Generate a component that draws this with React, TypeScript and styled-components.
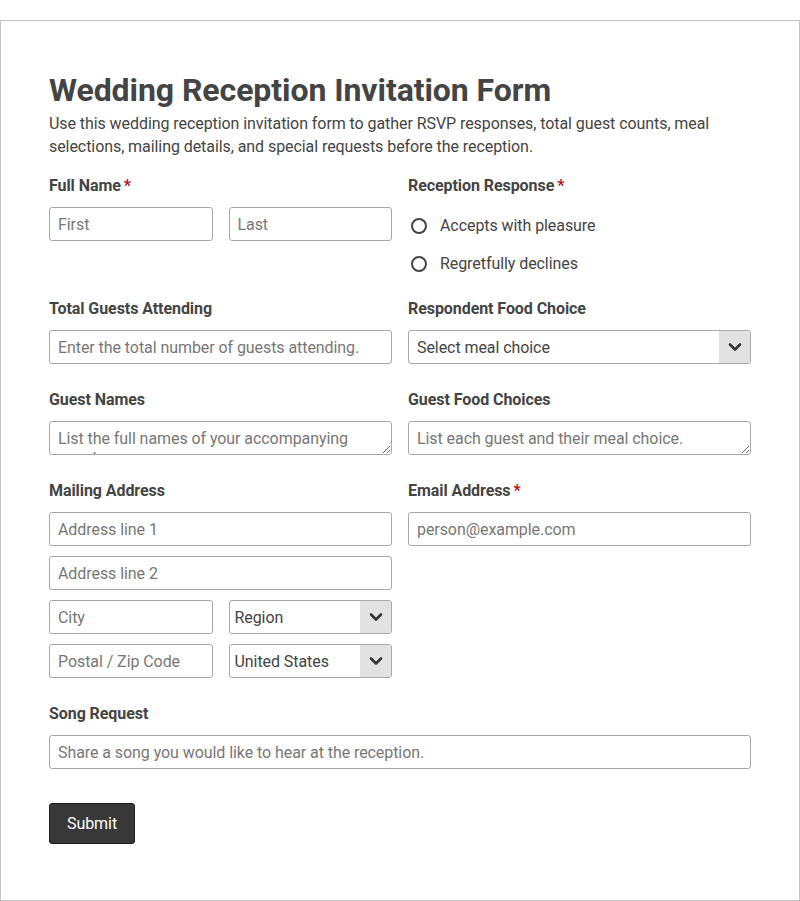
import styled, { createGlobalStyle } from "styled-components";

const GlobalStyle = createGlobalStyle`
  body {
    margin: 0;
    background: #fff;
    font-family: Roboto, "Liberation Sans", Arial, sans-serif;
    color: #444;
    letter-spacing: -0.07px;
  }
  * {
    box-sizing: border-box;
  }
`;

const Page = styled.div`
  width: 800px;
  margin-top: 20px;
  border: 1px solid #c4c4c4;
  padding: 49px 48px 56px 48px;
`;

const Title = styled.h1`
  margin: 0 0 2px;
  font-size: 32px;
  line-height: 40px;
  font-weight: 700;
  color: #444;
`;

const Description = styled.p`
  margin: 0 0 18px;
  font-size: 16px;
  line-height: 23px;
  color: #444;
`;

const Grid = styled.div`
  display: grid;
  grid-template-columns: 1fr 1fr;
  column-gap: 16px;
  row-gap: 26px;
`;

const Field = styled.div<{ $wide?: boolean }>`
  display: flex;
  flex-direction: column;
  grid-column: ${(p) => (p.$wide ? "1 / -1" : "auto")};
`;

const Label = styled.label`
  display: block;
  font-size: 16px;
  line-height: 20px;
  font-weight: 700;
  color: #444;
  margin-bottom: 11px;
`;

const Required = styled.span`
  color: #b3131b;
  margin-left: 3px;
`;

const Pair = styled.div`
  display: grid;
  grid-template-columns: 1fr 1fr;
  gap: 16px;
`;

const Stack = styled.div`
  display: flex;
  flex-direction: column;
  gap: 10px;
`;

const Input = styled.input`
  width: 100%;
  height: 34px;
  border: 1px solid #a8a8a8;
  border-radius: 3px;
  padding: 0 8px;
  font-family: inherit;
  font-size: 16px;
  letter-spacing: inherit;
  color: #444;
  background: #fff;

  &::placeholder {
    color: #777;
  }
`;

const TextArea = styled.textarea`
  width: 100%;
  height: 34px;
  border: 1px solid #a8a8a8;
  border-radius: 3px;
  padding: 7px 8px 0;
  font-family: inherit;
  font-size: 16px;
  line-height: 19px;
  letter-spacing: inherit;
  color: #444;
  resize: vertical;
  overflow: hidden;

  &::placeholder {
    color: #777;
  }
`;

const SelectBox = styled.div`
  display: flex;
  height: 34px;
  border: 1px solid #a8a8a8;
  border-radius: 3px;
  overflow: hidden;
  background: #fff;
`;

const Select = styled.select<{ $pad: number }>`
  flex: 1;
  min-width: 0;
  appearance: none;
  border: none;
  outline: none;
  background: transparent;
  padding: 0 0 0 ${(p) => p.$pad}px;
  font-family: inherit;
  font-size: 16px;
  letter-spacing: inherit;
  color: #444;
`;

const ArrowBox = styled.div`
  width: 31px;
  display: flex;
  align-items: center;
  justify-content: center;
  background: #e2e2e2;
  color: #333;
`;

const RadioGroup = styled.div`
  display: flex;
  flex-direction: column;
  gap: 19px;
  padding-top: 9px;
`;

const RadioOption = styled.label`
  display: flex;
  align-items: center;
  height: 19px;
  font-size: 16px;
  color: #444;
`;

const Radio = styled.input`
  appearance: none;
  width: 16px;
  height: 16px;
  margin: 0 13px 0 3px;
  border: 2px solid #444;
  border-radius: 50%;
  background: #fff;
`;

const Actions = styled.div`
  margin-top: 34px;
`;

const SubmitButton = styled.button`
  height: 41px;
  padding: 0 17px;
  border: 1px solid #1e1e1e;
  border-radius: 3px;
  background: #383838;
  color: #fff;
  font-family: inherit;
  font-size: 16px;
  letter-spacing: inherit;
`;

function Chevron() {
  return (
    <svg width="14" height="10" viewBox="0 0 14 10">
      <path
        d="M2 2.5 L7 7.5 L12 2.5"
        fill="none"
        stroke="currentColor"
        strokeWidth="2.6"
        strokeLinecap="round"
        strokeLinejoin="round"
      />
    </svg>
  );
}

function Dropdown({ value, pad }: { value: string; pad: number }) {
  return (
    <SelectBox>
      <Select $pad={pad} defaultValue={value}>
        <option>{value}</option>
      </Select>
      <ArrowBox>
        <Chevron />
      </ArrowBox>
    </SelectBox>
  );
}

function App() {
  return (
    <>
      <GlobalStyle />
      <Page>
        <Title>Wedding Reception Invitation Form</Title>
        <Description>
          Use this wedding reception invitation form to gather RSVP responses,
          total guest counts, meal selections, mailing details, and special
          requests before the reception.
        </Description>
        <Grid>
          <Field>
            <Label>
              Full Name<Required>*</Required>
            </Label>
            <Pair>
              <Input placeholder="First" />
              <Input placeholder="Last" />
            </Pair>
          </Field>
          <Field>
            <Label>
              Reception Response<Required>*</Required>
            </Label>
            <RadioGroup>
              <RadioOption>
                <Radio type="radio" name="response" />
                Accepts with pleasure
              </RadioOption>
              <RadioOption>
                <Radio type="radio" name="response" />
                Regretfully declines
              </RadioOption>
            </RadioGroup>
          </Field>

          <Field>
            <Label>Total Guests Attending</Label>
            <Input placeholder="Enter the total number of guests attending." />
          </Field>
          <Field>
            <Label>Respondent Food Choice</Label>
            <Dropdown value="Select meal choice" pad={8} />
          </Field>

          <Field>
            <Label>Guest Names</Label>
            <TextArea placeholder="List the full names of your accompanying guests." />
          </Field>
          <Field>
            <Label>Guest Food Choices</Label>
            <TextArea placeholder="List each guest and their meal choice." />
          </Field>

          <Field>
            <Label>Mailing Address</Label>
            <Stack>
              <Input placeholder="Address line 1" />
              <Input placeholder="Address line 2" />
              <Pair>
                <Input placeholder="City" />
                <Dropdown value="Region" pad={5} />
              </Pair>
              <Pair>
                <Input placeholder="Postal / Zip Code" />
                <Dropdown value="United States" pad={5} />
              </Pair>
            </Stack>
          </Field>
          <Field>
            <Label>
              Email Address<Required>*</Required>
            </Label>
            <Input placeholder="person@example.com" />
          </Field>

          <Field $wide>
            <Label>Song Request</Label>
            <Input placeholder="Share a song you would like to hear at the reception." />
          </Field>
        </Grid>
        <Actions>
          <SubmitButton type="submit">Submit</SubmitButton>
        </Actions>
      </Page>
    </>
  );
}

export default App;
